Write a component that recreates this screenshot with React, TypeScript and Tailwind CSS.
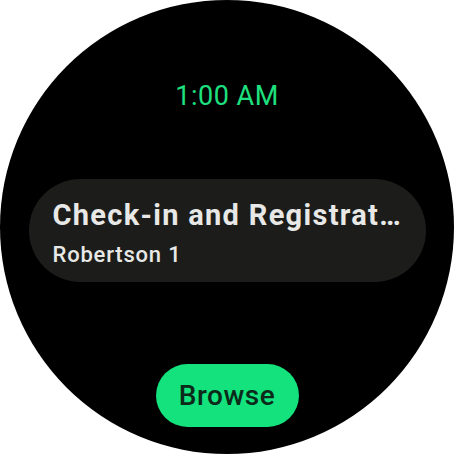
import React from "react"

const App: React.FC = () => {
  return (
    <div className="w-[454px] h-[454px] bg-white">
      <div
        className="w-[454px] h-[454px] rounded-full bg-black overflow-hidden flex flex-col items-center"
        style={{ fontFamily: "Roboto, 'Liberation Sans', sans-serif" }}
      >
        <div className="mt-[80px] h-[32px] text-[27px] leading-[32px] tracking-[0.5px] text-[#1ee07f]">
          1:00 AM
        </div>
        <div className="mt-[67px] w-[397px] h-[103px] rounded-full bg-[#1c1d1b] pl-[24px] pr-[24px] pt-[20px] flex flex-col">
          <div className="text-[29px] leading-[32px] font-bold tracking-[1.3px] text-[#e8e8e6] truncate">
            Check-in and Registration
          </div>
          <div className="mt-[11px] text-[22px] leading-[26px] font-medium tracking-[0.8px] text-[#e8e8e6]">
            Robertson 1
          </div>
        </div>
        <button className="mt-[82px] w-[143px] h-[63px] rounded-full bg-[#13e27d] text-[28px] font-medium tracking-[0.5px] text-[#0b2a19]">
          Browse
        </button>
      </div>
    </div>
  )
}

export default App
